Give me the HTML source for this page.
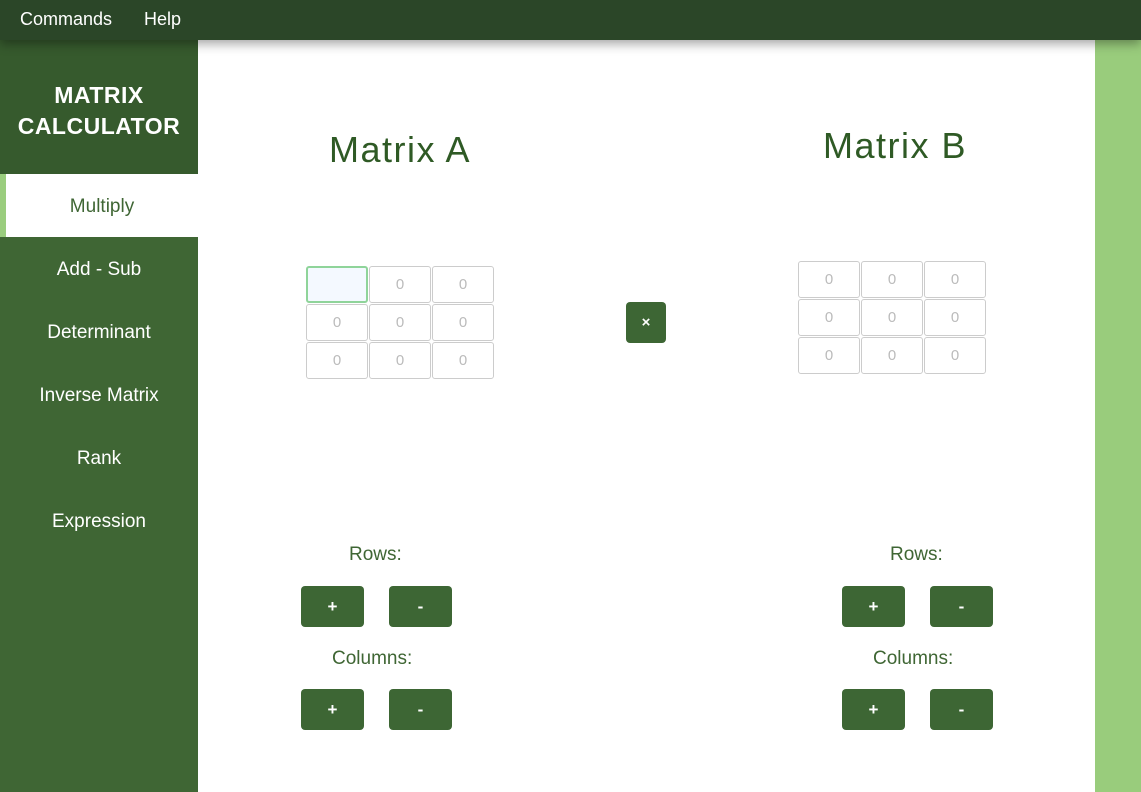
<!DOCTYPE html>
<html><head><style>
*{margin:0;padding:0;box-sizing:border-box}
body{width:1141px;height:792px;overflow:hidden;background:#fff;font-family:"Liberation Sans",sans-serif;position:relative}
.top{position:absolute;left:0;top:0;width:1141px;height:40px;background:#2b4628;color:#fff;font-size:18px;z-index:2;box-shadow:0 4px 10px rgba(0,0,0,.35)}
.top span{position:absolute;top:9px}
.side{position:absolute;left:0;top:40px;width:198px;height:752px;background:#3f6634}
.head{height:134px;background:#365a2d;color:#fff;font-weight:bold;font-size:23px;text-align:center;padding-top:40px;line-height:31px;letter-spacing:0.5px}
.item{height:63px;line-height:66px;text-align:center;color:#fff;font-size:19px}
.item.act{background:#fff;color:#3f6634;border-left:6px solid #9acd7e}
.right{position:absolute;left:1095px;top:40px;width:46px;height:752px;background:#99cc7c}
.title{position:absolute;color:#2f5a25;font-size:36px;letter-spacing:1.5px}
.cell{position:absolute;width:62px;height:37px;border:1px solid #ccc;border-radius:3px;color:#bbb;font-size:15px;text-align:center;line-height:35px}
.btn{position:absolute;width:63px;height:41px;background:#3d6634;border-radius:4px;color:#fff;font-weight:bold;font-size:17px;text-align:center;line-height:41px}
.lbl{position:absolute;color:#3f6634;font-size:19px}
</style></head><body>
<div class="top"><span style="left:20px">Commands</span><span style="left:144px">Help</span></div>
<div class="side">
<div class="head">MATRIX<br>CALCULATOR</div>
<div class="item act">Multiply</div>
<div class="item">Add - Sub</div>
<div class="item">Determinant</div>
<div class="item">Inverse Matrix</div>
<div class="item">Rank</div>
<div class="item">Expression</div>
</div>
<div class="right"></div>
<div class="title" style="left:329px;top:129px">Matrix A</div>
<div class="title" style="left:823px;top:125px">Matrix B</div>

<div class="cell" style="left:306px;top:266px;border:2px solid #8fd49a;background:#f4f9ff"></div>
<div class="cell" style="left:369px;top:266px">0</div>
<div class="cell" style="left:432px;top:266px">0</div>
<div class="cell" style="left:306px;top:304px">0</div>
<div class="cell" style="left:369px;top:304px">0</div>
<div class="cell" style="left:432px;top:304px">0</div>
<div class="cell" style="left:306px;top:342px">0</div>
<div class="cell" style="left:369px;top:342px">0</div>
<div class="cell" style="left:432px;top:342px">0</div>

<div class="cell" style="left:798px;top:261px">0</div>
<div class="cell" style="left:861px;top:261px">0</div>
<div class="cell" style="left:924px;top:261px">0</div>
<div class="cell" style="left:798px;top:299px">0</div>
<div class="cell" style="left:861px;top:299px">0</div>
<div class="cell" style="left:924px;top:299px">0</div>
<div class="cell" style="left:798px;top:337px">0</div>
<div class="cell" style="left:861px;top:337px">0</div>
<div class="cell" style="left:924px;top:337px">0</div>

<div class="btn" style="left:626px;top:302px;width:40px;font-size:15px">×</div>

<div class="lbl" style="left:349px;top:544px">Rows:</div>
<div class="btn" style="left:301px;top:586px">+</div>
<div class="btn" style="left:389px;top:586px">-</div>
<div class="lbl" style="left:332px;top:648px">Columns:</div>
<div class="btn" style="left:301px;top:689px">+</div>
<div class="btn" style="left:389px;top:689px">-</div>

<div class="lbl" style="left:890px;top:544px">Rows:</div>
<div class="btn" style="left:842px;top:586px">+</div>
<div class="btn" style="left:930px;top:586px">-</div>
<div class="lbl" style="left:873px;top:648px">Columns:</div>
<div class="btn" style="left:842px;top:689px">+</div>
<div class="btn" style="left:930px;top:689px">-</div>
</body></html>
